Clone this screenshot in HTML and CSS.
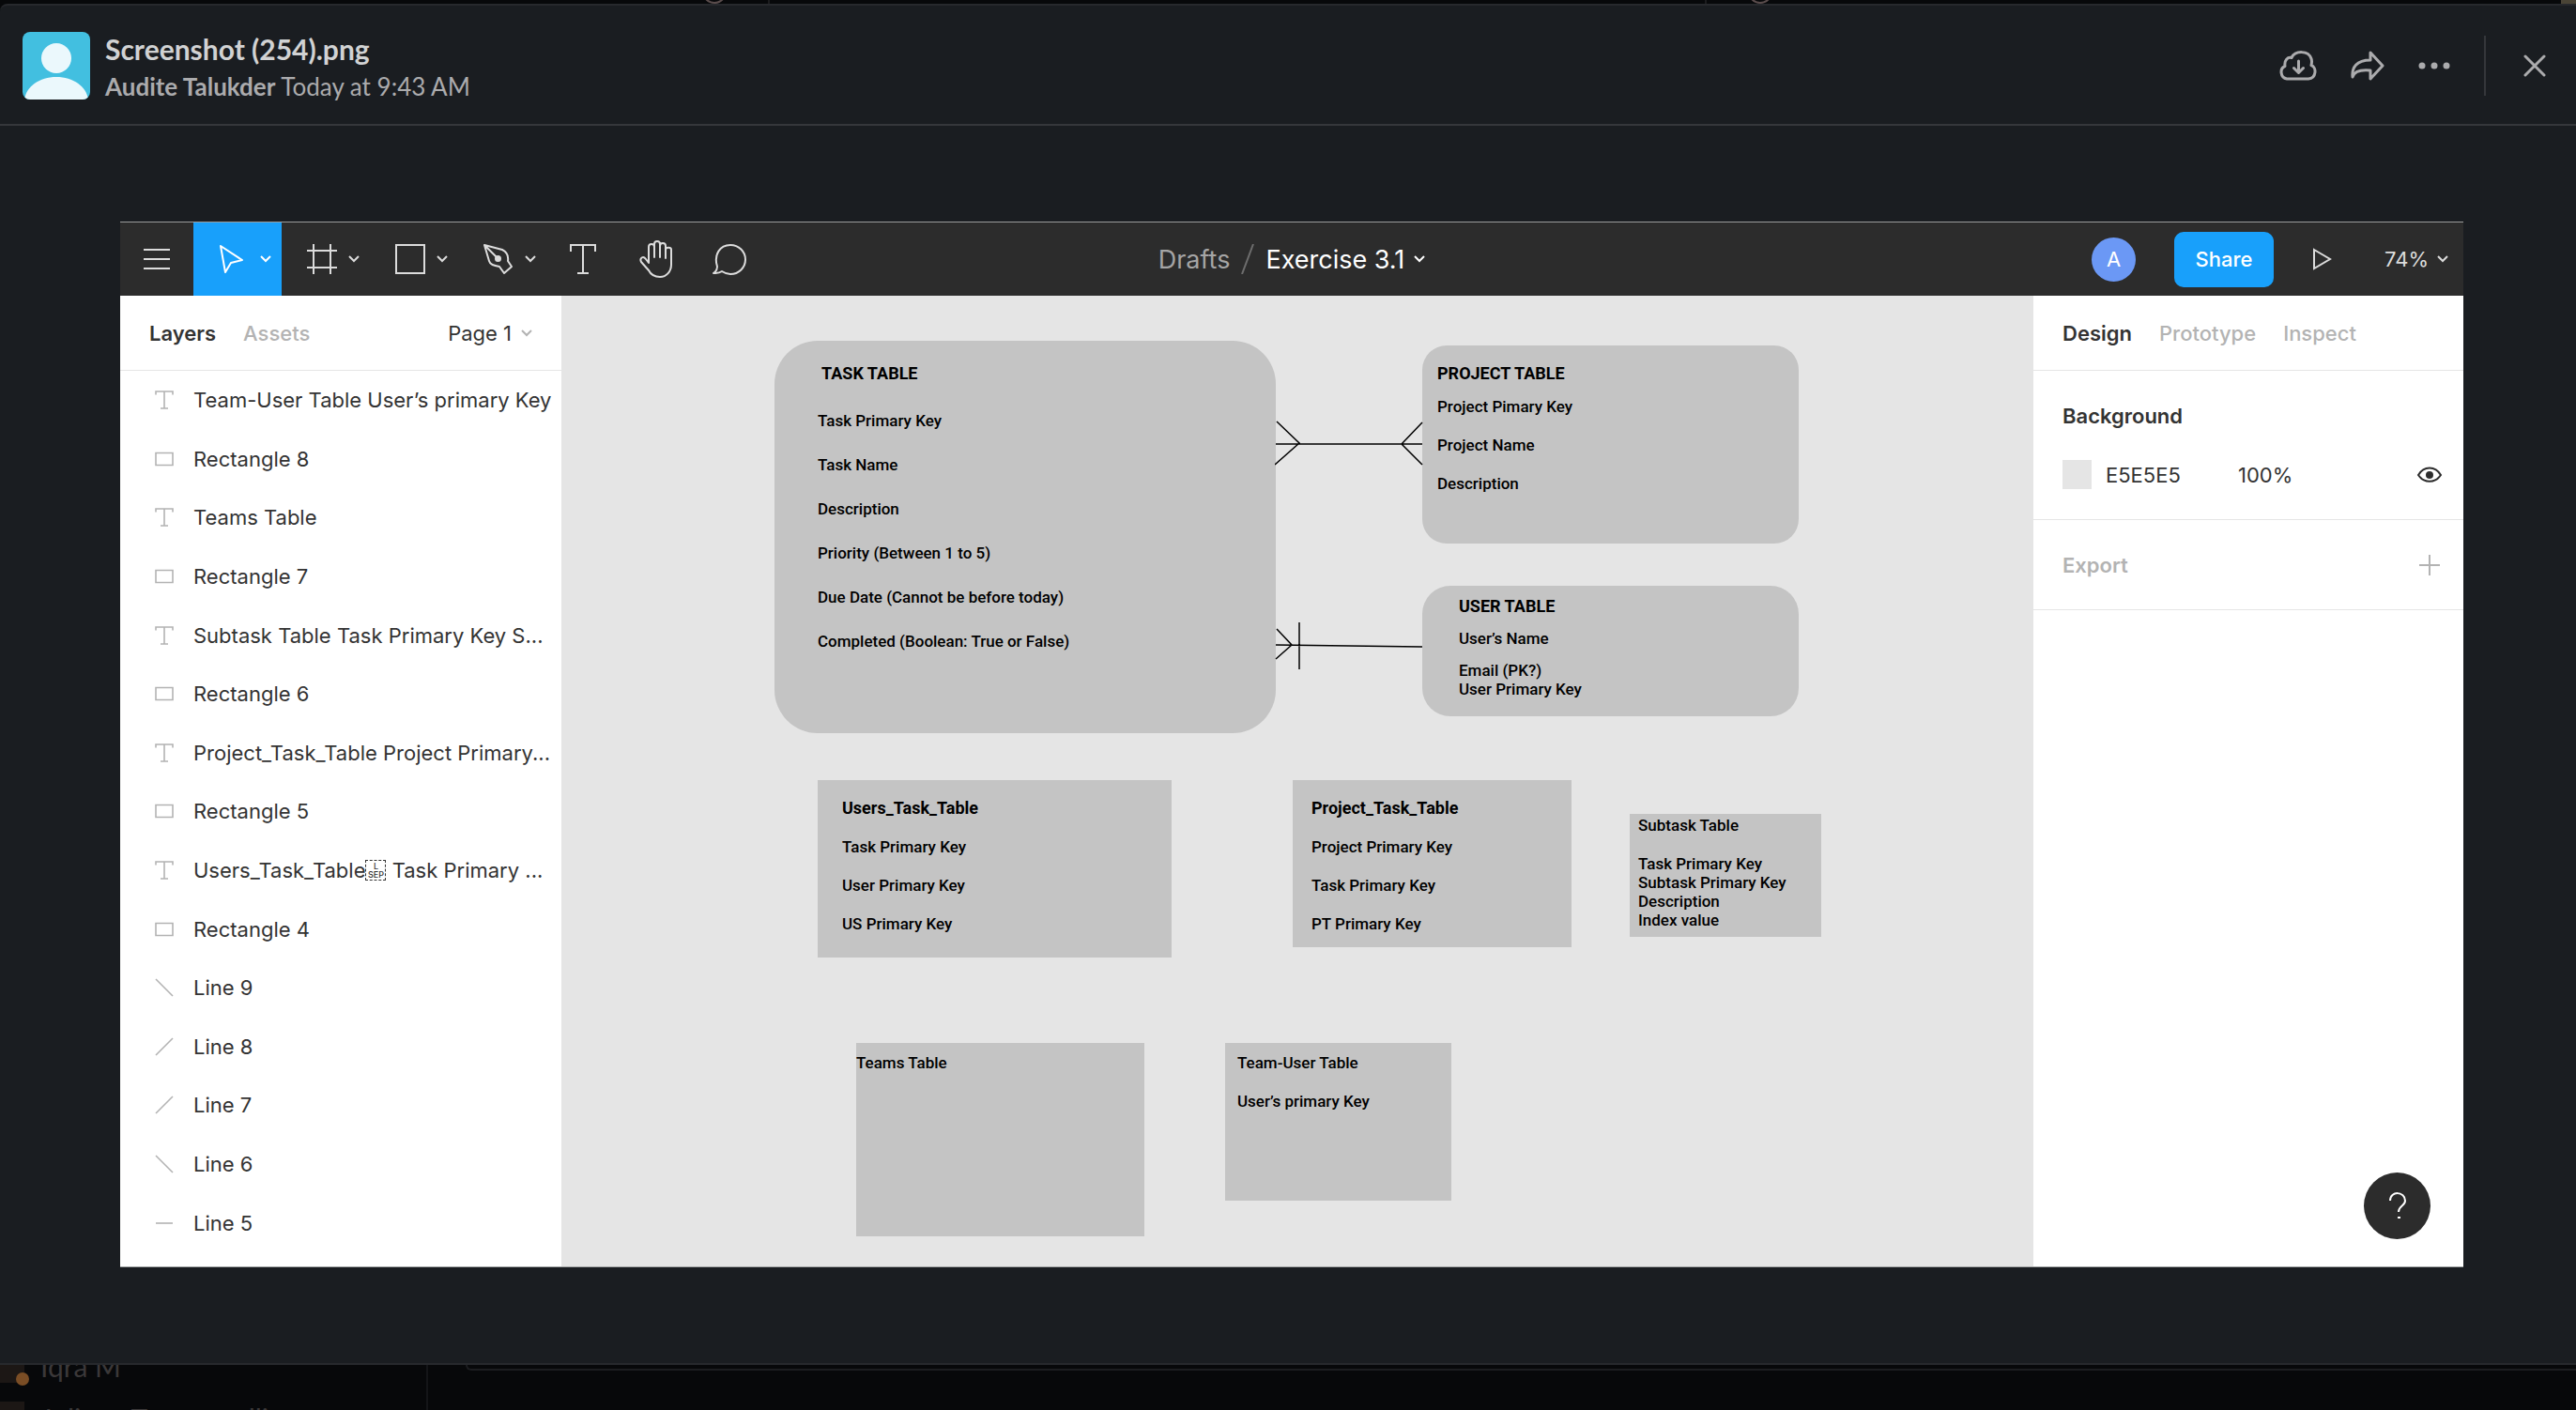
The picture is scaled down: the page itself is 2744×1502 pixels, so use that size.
FILE: index.html
```html
<!DOCTYPE html>
<html lang="en">
<head>
<meta charset="utf-8">
<title>Screenshot (254).png</title>
<meta name="viewport" content="width=device-width, initial-scale=1">
<link rel="stylesheet" href="styles.css">
</head>
<body>
<svg class="sprite" aria-hidden="true">
  <symbol id="chev" viewBox="0 0 12 8"><path d="M1 1l5 5 5-5" fill="none" stroke="currentColor" stroke-width="2"/></symbol>
  <symbol id="text" viewBox="0 0 20 20"><path d="M1 4.500V1h18v3.500M10 1v18M6 19h8" fill="none" stroke="currentColor" stroke-width="1.600"/></symbol>
  <symbol id="rect" viewBox="0 0 20 20"><path d="M1 3.500h18v13H1z" fill="none" stroke="currentColor" stroke-width="1.600"/></symbol>
  <symbol id="down" viewBox="0 0 20 20"><path d="M1 1l18 18" stroke="currentColor" stroke-width="1.600"/></symbol>
  <symbol id="up" viewBox="0 0 20 20"><path d="M1 19L19 1" stroke="currentColor" stroke-width="1.600"/></symbol>
  <symbol id="flat" viewBox="0 0 20 20"><path d="M1 10h18" stroke="currentColor" stroke-width="1.600"/></symbol>
</svg>
<div class="page">
  <div class="behind-top" aria-hidden="true"><i></i><b></b><b></b><i></i><u></u></div>
  <section class="viewer" role="dialog" aria-label="File viewer">
    <header class="viewer-head">
      <svg class="avatar" viewBox="0 0 72 72" aria-hidden="true"><path fill="#42bfe0" d="M0 0h72v72H0z"/><circle cx="36" cy="28" r="16" fill="#ebf8fc"/><path fill="#ebf8fc" d="M2 72c2-14 16-24 34-24s32 10 34 24z"/></svg>
      <div class="file">
        <h1>Screenshot (254).png</h1>
        <p><strong>Audite Talukder</strong> Today at 9:43 AM</p>
      </div>
      <div class="head-actions">
        <button aria-label="Download"><svg width="40" height="32" viewBox="0 0 40 32" fill="none" stroke="currentColor" stroke-width="3" stroke-linecap="round" stroke-linejoin="round"><path d="M8 30C1 29 0 19 6 16.500 5 10 9 6.500 13 7.500c4-8 18-8 21 1 1 3 .5 5 0 7 6 2 5.500 14-3 14.500zM20.500 11v12M15.500 18.500l5 5 5-5"/></svg></button>
        <button aria-label="Share file"><svg width="36" height="32" viewBox="0 0 36 32" fill="none" stroke="currentColor" stroke-width="3" stroke-linejoin="round" stroke-linecap="round"><path d="M21 2l13 14-13 14v-9C11 20 4 21 2 28 1 18 6 10 21 10z"/></svg></button>
        <button aria-label="More"><svg width="34" height="8" viewBox="0 0 34 8" fill="currentColor"><circle cx="4" cy="4" r="3.500"/><circle cx="17" cy="4" r="3.500"/><circle cx="30" cy="4" r="3.500"/></svg></button>
        <span class="rule"></span>
        <button aria-label="Close"><svg width="24" height="24" viewBox="0 0 24 24" stroke="currentColor" stroke-width="3" stroke-linecap="round"><path d="M2 2l20 20M22 2L2 22"/></svg></button>
      </div>
    </header>
    <main class="stage">
      <div class="editor">
        <div class="toolbar">
          <div class="tools">
            <button class="menu" aria-label="Menu"><svg width="28" height="22" viewBox="0 0 28 22" stroke="currentColor" stroke-width="2"><path d="M0 1h28M0 11h28M0 21h28"/></svg></button>
            <button class="tool active" aria-label="Move"><svg width="28" height="32" viewBox="0 0 28 32" fill="none" stroke="currentColor" stroke-width="2" stroke-linejoin="round"><path d="M2 2l23 15-12 3-6 10z"/></svg><svg class="chev"><use href="#chev"/></svg></button>
            <button class="tool" aria-label="Frame"><svg width="32" height="32" viewBox="0 0 32 32" stroke="currentColor" stroke-width="2"><path d="M0 7h32M0 25h32M7 0v32M25 0v32"/></svg><svg class="chev"><use href="#chev"/></svg></button>
            <button class="tool" aria-label="Shape"><svg width="32" height="32" viewBox="0 0 32 32" fill="none" stroke="currentColor" stroke-width="2"><path d="M1 1h30v30H1z"/></svg><svg class="chev"><use href="#chev"/></svg></button>
            <button class="tool" aria-label="Pen"><svg width="32" height="32" viewBox="0 0 32 32" fill="none" stroke="currentColor" stroke-width="2" stroke-linejoin="round"><path d="M1 1l5 17c1 4 5 5 11 6l5 7 8-7-4-6c1-7-2-10-6-12zM1 1l13 13"/><circle cx="15.500" cy="15.500" r="2.500" fill="currentColor"/></svg><svg class="chev"><use href="#chev"/></svg></button>
            <button class="single" aria-label="Text"><svg width="28" height="32" viewBox="0 0 28 32" fill="none" stroke="currentColor" stroke-width="2"><path d="M1 8V1h26v7M14 1v30M8 31h12"/></svg></button>
            <button class="single" aria-label="Hand"><svg width="36" height="40" viewBox="0 0 36 40" fill="none" stroke="currentColor" stroke-width="2" stroke-linecap="round" stroke-linejoin="round"><path d="M16 18V4c0-4 6-4 6 0v14M10 19V7c0-4 6-4 6 0M22 6c0-4 6-4 6 0v13M28 10c0-3 6-3 6 0v16c0 7-5 13-12 13-6 0-10-3-12-7L2 23c-2-4 2-7 5-3l3 4v-6"/></svg></button>
            <button class="single" aria-label="Comment"><svg width="36" height="34" viewBox="0 0 36 34" fill="none" stroke="currentColor" stroke-width="2" stroke-linejoin="round"><path d="M1 32c3-2 4-4 4-7C1 12 8 2 19 2c9 0 16 7 16 15.500S28 33 19 33c-4 0-6-1-9-3-3 2-6 2-9 2z"/></svg></button>
          </div>
          <div class="crumbs"><a href="#drafts">Drafts</a><svg width="14" height="32" viewBox="0 0 14 32" stroke="currentColor" stroke-width="2"><path d="M13 0L1 32"/></svg><button>Exercise 3.1<svg class="chev"><use href="#chev"/></svg></button></div>
          <div class="right-tools">
            <span class="initial">A</span>
            <button class="share">Share</button>
            <button class="play" aria-label="Present"><svg width="20" height="24" viewBox="0 0 20 24" fill="none" stroke="currentColor" stroke-width="2"><path d="M1 2l17 10L1 22z"/></svg></button>
            <button class="zoom">74%<svg class="chev"><use href="#chev"/></svg></button>
          </div>
        </div>
        <div class="workspace">
          <aside class="layers">
            <div class="tabs"><button class="on">Layers</button><button>Assets</button><button class="page-pick">Page 1<svg class="chev"><use href="#chev"/></svg></button></div>
            <ul>
              <li><svg><use href="#text"/></svg><span>Team-User Table User’s primary Key</span></li>
              <li><svg><use href="#rect"/></svg><span>Rectangle 8</span></li>
              <li><svg><use href="#text"/></svg><span>Teams Table</span></li>
              <li><svg><use href="#rect"/></svg><span>Rectangle 7</span></li>
              <li><svg><use href="#text"/></svg><span>Subtask Table Task Primary Key S...</span></li>
              <li><svg><use href="#rect"/></svg><span>Rectangle 6</span></li>
              <li><svg><use href="#text"/></svg><span>Project_Task_Table Project Primary...</span></li>
              <li><svg><use href="#rect"/></svg><span>Rectangle 5</span></li>
              <li><svg><use href="#text"/></svg><span class="with-sep">Users_Task_Table<small class="sep"><em>L</em><em>SEP</em></small> Task Primary ...</span></li>
              <li><svg><use href="#rect"/></svg><span>Rectangle 4</span></li>
              <li><svg><use href="#down"/></svg><span>Line 9</span></li>
              <li><svg><use href="#up"/></svg><span>Line 8</span></li>
              <li><svg><use href="#up"/></svg><span>Line 7</span></li>
              <li><svg><use href="#down"/></svg><span>Line 6</span></li>
              <li><svg><use href="#flat"/></svg><span>Line 5</span></li>
            </ul>
          </aside>
          <div class="canvas">
            <div class="node task"><h2>TASK TABLE</h2><p>Task Primary Key</p><p>Task Name</p><p>Description</p><p>Priority (Between 1 to 5)</p><p>Due Date (Cannot be before today)</p><p>Completed (Boolean: True or False)</p></div>
            <div class="node project"><h2>PROJECT TABLE</h2><p>Project Pimary Key</p><p>Project Name</p><p>Description</p></div>
            <div class="node user"><h2>USER TABLE</h2><p>User’s Name</p><p>Email (PK?)<br>User Primary Key</p></div>
            <div class="node users-task"><h2>Users_Task_Table</h2><p>Task Primary Key</p><p>User Primary Key</p><p>US Primary Key</p></div>
            <div class="node project-task"><h2>Project_Task_Table</h2><p>Project Primary Key</p><p>Task Primary Key</p><p>PT Primary Key</p></div>
            <div class="node subtask"><p>Subtask Table</p><p>Task Primary Key<br>Subtask Primary Key<br>Description<br>Index value</p></div>
            <div class="node teams"><p>Teams Table</p></div>
            <div class="node team-user"><p>Team-User Table</p><p>User’s primary Key</p></div>
            <svg class="links" viewBox="0 0 160 270" fill="none" stroke="#000" stroke-width="1.500" aria-hidden="true"><path d="M1 30h156M2 6l24 23L0 52M157 7l-22 23 22 22M1 244l156 2M2 227l16 17-17 15M26 220v50"/></svg>
          </div>
          <aside class="props">
            <div class="tabs"><button class="on">Design</button><button>Prototype</button><button>Inspect</button></div>
            <section class="background"><h2>Background</h2>
              <div class="fill"><span class="swatch"></span><span class="hex">E5E5E5</span><span>100%</span><button aria-label="Toggle visibility"><svg width="28" height="20" viewBox="0 0 28 20" fill="none" stroke="#2c2c2c" stroke-width="2"><path d="M2 10c6-10 18-10 24 0-6 9-18 9-24 0z"/><circle cx="14" cy="10" r="4" fill="#2c2c2c" stroke="none"/></svg></button></div>
            </section>
            <section class="export"><h2>Export</h2><button aria-label="Add export"><svg width="22" height="22" viewBox="0 0 22 22" stroke="#b3b3b3" stroke-width="2"><path d="M0 11h22M11 0v22"/></svg></button></section>
            <button class="help" aria-label="Help"><svg width="18" height="30" viewBox="0 0 18 30" fill="none" stroke="#fff" stroke-width="2"><path d="M1 9c0-11 16-10 16 0 0 6-7 5-7 12M9 27h3"/></svg></button>
          </aside>
        </div>
      </div>
    </main>
  </section>
  <footer class="behind-bottom" aria-hidden="true">
    <div class="people">
      <div class="person"><i class="face"></i><i class="status"></i><span>Iqra M</span></div>
      <div class="person"><i class="face"></i><span>Juliana Tommasulli</span></div>
    </div>
    <div class="composer"></div>
  </footer>
</div>
</body>
</html>
```
FILE: styles.css
```css
* { box-sizing: border-box; margin: 0; padding: 0; }
body { font-family: Inter, "Liberation Sans", sans-serif; background: #07080a; }
button { background: none; border: 0; font: inherit; color: inherit; display: flex; align-items: center; cursor: pointer; }
svg { display: block; flex: none; }
.sprite { position: absolute; width: 0; height: 0; }
.chev { width: 12px; height: 8px; }

.page { display: flex; flex-direction: column; height: 100vh; overflow: hidden; }
.behind-top { height: 4px; flex: none; display: flex; gap: 44px; padding-left: 748px; overflow: hidden; }
.behind-top i { width: 26px; height: 26px; margin-top: -22px; border: 2px solid #5a4c4c; border-radius: 50%; }
.behind-top b { width: 2px; height: 4px; background: #1c1c1e; }
.behind-top b + b { margin-left: 952px; }
.behind-top u { width: 16px; height: 4px; margin-left: auto; background: #4a4436; }

.viewer { flex: 1; min-height: 0; display: flex; flex-direction: column; background: #1a1d21; border: solid #27292d; border-width: 2px 0; border-top-left-radius: 8px; }
.viewer-head { height: 128px; flex: none; display: flex; align-items: center; padding: 2px 32px 0 24px; border-bottom: 2px solid #35373b; font-family: Lato, "Liberation Sans", sans-serif; }
.avatar { width: 72px; height: 72px; border-radius: 8px; }
.file { margin-left: 16px; padding-top: 4px; }
.file h1 { font-size: 30px; line-height: 40px; font-weight: 700; color: #d1d2d3; }
.file p { font-size: 26px; line-height: 40px; color: #ababad; }
.head-actions { margin-left: auto; display: flex; align-items: center; color: #ababad; gap: 36px; }
.head-actions .rule { width: 2px; height: 64px; background: #35373b; }
.head-actions .rule + button { margin-left: 4px; }

.stage { flex: 1; min-height: 0; padding: 102px 120px 102px 128px; display: flex; }
.editor { flex: 1; min-width: 0; display: flex; flex-direction: column; border-top: 1px solid #9a9b9c; border-bottom: 1px solid #a4a6a7; }
.toolbar { height: 78px; flex: none; background: #2c2c2c; color: #dcdcdc; display: grid; grid-template-columns: 1fr auto 1fr; }
.tools { display: flex; }
.menu { width: 78px; justify-content: center; }
.tool { width: 94px; padding: 0 11px 0 27px; justify-content: space-between; }
.active { background: #18a0fb; color: #fff; }
.single { width: 78px; justify-content: center; }
.crumbs { display: flex; align-items: center; gap: 12px; font-size: 27px; color: #a5a5a5; }
.crumbs a { color: inherit; text-decoration: none; }
.crumbs svg { color: #6d6d6d; }
.crumbs button { color: #fff; gap: 10px; }
.crumbs button svg { color: #fff; }
.right-tools { display: flex; align-items: center; justify-content: flex-end; padding-right: 16px; }
.initial { width: 47px; height: 47px; border-radius: 50%; background: #6b98f5; color: #fff; font-size: 22px; display: grid; place-items: center; }
.share { width: 106px; height: 59px; margin-left: 41px; justify-content: center; border-radius: 10px; background: #18a0fb; color: #fff; font-size: 22px; font-weight: 500; }
.play { margin-left: 42px; }
.zoom { margin-left: 56px; gap: 9px; font-size: 22px; }

.workspace { flex: 1; min-height: 0; display: flex; }
.layers { width: 471px; flex: none; background: #fff; border-right: 1px solid #e5e5e5; display: flex; flex-direction: column; padding-bottom: 15px; color: #333; }
.tabs { height: 80px; flex: none; display: flex; align-items: center; gap: 29px; padding: 0 31px; border-bottom: 1px solid #e5e5e5; font-size: 22px; font-weight: 500; color: #b3b3b3; }
.tabs .on { font-weight: 600; color: #333; }
.page-pick { margin-left: auto; gap: 10px; font-weight: 400; color: #333; }
.page-pick svg { color: #b3b3b3; }
.layers ul { list-style: none; flex: 1; min-height: 0; display: flex; flex-direction: column; }
.layers li { flex: 1; display: flex; align-items: center; gap: 21px; padding-left: 37px; font-size: 22px; white-space: nowrap; }
.layers li svg { width: 20px; height: 20px; color: #b3b3b3; }
.with-sep { display: flex; align-items: center; white-space: pre; }
.sep { width: 22px; height: 22px; border: 1px dashed #333; display: flex; flex-direction: column; align-items: center; justify-content: center; }
.sep em { font-style: normal; font-size: 9px; line-height: 9px; font-weight: 500; }

.canvas { flex: 1; min-width: 0; position: relative; overflow: hidden; background: #e5e5e5; font-family: Roboto, "Liberation Sans", sans-serif; font-size: 17px; line-height: 20px; font-weight: 500; color: #000; }
.node { position: absolute; background: #c4c4c4; display: flex; flex-direction: column; gap: 21px; }
.node h2 { font-size: 18px; line-height: 20px; font-weight: 700; }
.task { left: 226px; top: 48px; width: 534px; height: 418px; border-radius: 46px; padding: 25px 46px; gap: 27px; }
.task h2 { padding-left: 4px; margin-bottom: 3px; }
.project { left: 916px; top: 53px; width: 401px; height: 211px; border-radius: 26px; padding: 20px 16px; }
.project h2 { margin-bottom: -6px; }
.user { left: 916px; top: 309px; width: 401px; height: 139px; border-radius: 30px; padding: 12px 39px; gap: 14px; }
.users-task { left: 272px; top: 516px; width: 377px; height: 189px; padding: 20px 26px; }
.project-task { left: 778px; top: 516px; width: 297px; height: 178px; padding: 20px 20px; }
.subtask { left: 1137px; top: 552px; width: 204px; height: 131px; padding: 2px 9px; }
.teams { left: 313px; top: 796px; width: 307px; height: 206px; padding: 11px 0; }
.team-user { left: 706px; top: 796px; width: 241px; height: 168px; padding: 11px 13px; }
.links { position: absolute; left: 759px; top: 128px; width: 160px; height: 270px; }

.props { width: 459px; flex: none; background: #fff; color: #333; font-size: 22px; position: relative; border-left: 1px solid #e5e5e5; }
.props h2 { font-size: 22px; line-height: 28px; font-weight: 600; }
.background { height: 159px; padding: 34px 22px 32px 31px; border-bottom: 1px solid #e5e5e5; }
.fill { display: flex; align-items: center; margin-top: 33px; }
.swatch { width: 31px; height: 31px; background: #e5e5e5; margin-right: 15px; }
.hex { width: 141px; }
.fill button { margin-left: auto; }
.export { height: 96px; padding: 0 25px 0 31px; display: flex; align-items: center; justify-content: space-between; border-bottom: 1px solid #e5e5e5; color: #b3b3b3; }
.help { position: absolute; right: 35px; bottom: 29px; width: 71px; height: 71px; border-radius: 50%; background: #2c2c2c; justify-content: center; }

.behind-bottom { height: 48px; flex: none; display: flex; overflow: hidden; font-family: Lato, "Liberation Sans", sans-serif; color: #3b3839; }
.people { width: 456px; border-right: 2px solid #141518; }
.person { height: 56px; display: flex; align-items: center; font-size: 30px; position: relative; padding-left: 43px; margin-top: -27px; white-space: nowrap; }
.person + .person { margin-top: 0; }
.face { position: absolute; left: 0; top: 10px; width: 26px; height: 36px; background: #1c1715; }
.status { position: absolute; left: 17px; top: 35px; width: 14px; height: 14px; border-radius: 50%; background: #7a4d25; }
.composer { flex: 1; height: 6px; margin-left: 40px; border: solid #1c1d20; border-width: 0 0 2px 2px; border-bottom-left-radius: 8px; }
```
